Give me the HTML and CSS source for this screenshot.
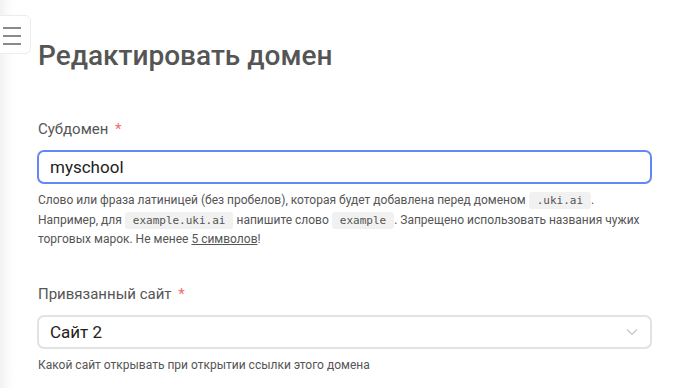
FILE: index.html
```html
<!DOCTYPE html>
<html lang="ru">
<head>
    <meta charset="UTF-8">
    <meta name="viewport" content="width=device-width, initial-scale=1.0">
    <title>Редактировать домен</title>
    <link rel="stylesheet" href="styles.css">
</head>
<body>
    <button class="menu-toggle" type="button" aria-label="Меню">
        <span></span>
        <span></span>
        <span></span>
    </button>

    <main class="page">
        <h1>Редактировать домен</h1>

        <form class="domain-form">
            <div class="field">
                <label class="field-label" for="subdomain">Субдомен <span class="required">*</span></label>
                <input class="field-input" type="text" id="subdomain" value="myschool">
                <p class="field-help">
                    Слово или фраза латиницей (без пробелов), которая будет добавлена перед доменом <code>.uki.ai</code>.
                    Например, для <code>example.uki.ai</code> напишите слово <code>example</code>. Запрещено использовать названия чужих
                    торговых марок. Не менее <a href="#">5 символов</a>!
                </p>
            </div>

            <div class="field">
                <label class="field-label" for="site">Привязанный сайт <span class="required">*</span></label>
                <div class="select">
                    <span id="site">Сайт 2</span>
                    <svg class="select-arrow" width="12" height="8" viewBox="0 0 12 8">
                        <path d="M1 1.5 L6 6.5 L11 1.5" fill="none" stroke="#c4c4c4" stroke-width="1.2"/>
                    </svg>
                </div>
                <p class="field-help">Какой сайт открывать при открытии ссылки этого домена</p>
            </div>
        </form>
    </main>
</body>
</html>
```

FILE: styles.css
```css
body {
    font-family: Roboto, "Noto Sans", Arial, sans-serif;
    background: linear-gradient(to right, #f2f2f2 0, #fbfbfb 8px, #fff 14px);
    margin: 0;
    color: #555;
}
.menu-toggle {
    position: absolute;
    top: 15px;
    left: -8px;
    width: 39px;
    height: 39px;
    padding: 2px 0 0 10px;
    border: 1px solid #ececec;
    border-radius: 6px;
    background-color: white;
    display: flex;
    flex-direction: column;
    justify-content: center;
    gap: 6px;
    cursor: pointer;
}
.menu-toggle span {
    display: block;
    width: 18px;
    height: 2px;
    background-color: #8a8a8a;
}
.page {
    padding: 39px 31px 0 37px;
}
h1 {
    margin: 0;
    padding-left: 1px;
    font-size: 28px;
    line-height: 34px;
    font-weight: 500;
    color: #555;
}
.domain-form {
    margin-top: 46px;
    display: flex;
    flex-direction: column;
    gap: 35px;
}
.field {
    display: flex;
    flex-direction: column;
}
.field-label {
    font-size: 15px;
    line-height: 20px;
    color: #555;
    padding-left: 1px;
    margin-bottom: 11px;
}
.required {
    color: #f26b6b;
    margin-left: 3px;
}
.field-input {
    box-sizing: border-box;
    height: 34px;
    padding: 0 11px;
    border: 2px solid #6487f6;
    border-radius: 7px;
    font-family: Roboto, Arial, sans-serif;
    font-size: 17px;
    color: #222;
    outline: none;
}
.select {
    box-sizing: border-box;
    height: 34px;
    padding: 0 12px 0 11px;
    border: 2px solid #e2e2e2;
    border-radius: 7px;
    display: flex;
    align-items: center;
    justify-content: space-between;
    font-size: 17px;
    color: #222;
}
.field-help {
    margin: 7px 0 0;
    padding-left: 1px;
    font-size: 12px;
    line-height: 18.5px;
    color: #555;
}
.field-help code {
    font-family: "DejaVu Sans Mono", monospace;
    font-size: 11px;
    background-color: #f1f1f1;
    border-radius: 3px;
    padding: 2px 8px;
    color: #555;
}
.field-help a {
    color: #555;
}
```
